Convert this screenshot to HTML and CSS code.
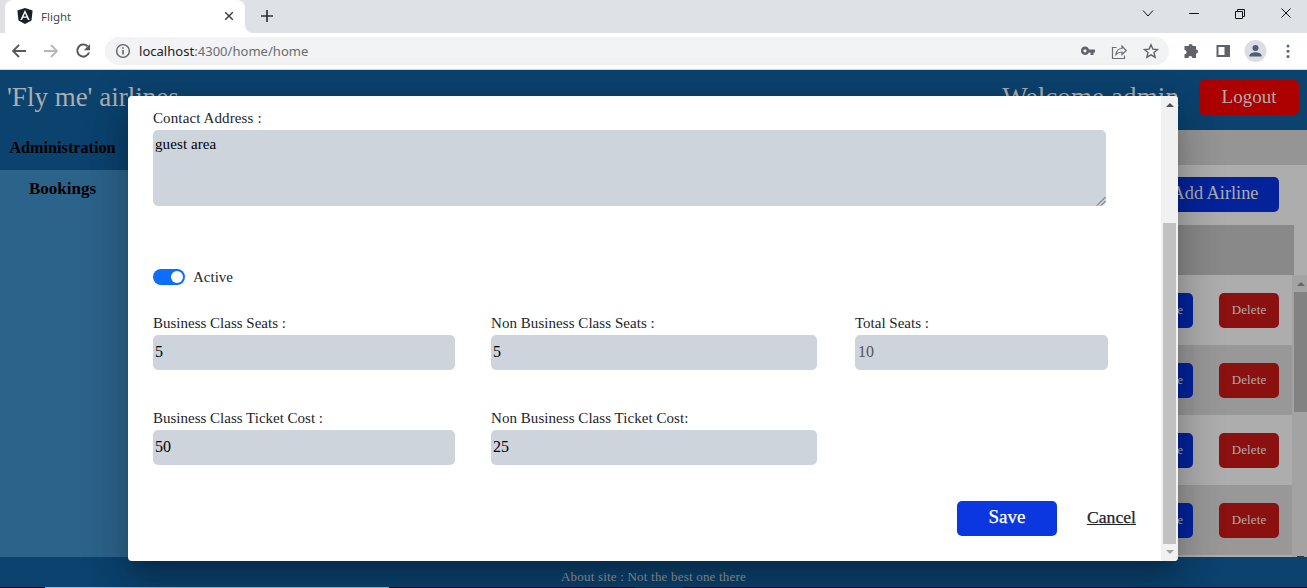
FILE: index.html
```html
<!DOCTYPE html>
<html lang="en">
<head>
<meta charset="utf-8">
<title>Flight</title>
<link rel="stylesheet" href="styles.css">
</head>
<body>
<div class="window">
  <div class="tabs">
    <div class="tab">
      <svg class="favicon" width="16" height="16" viewBox="0 0 16 16"><path d="M8 0l7.600 2.600-1.100 9.900L8 16l-6.500-3.500L.4 2.600z" fill="#17202b"/><path d="M8 1.900l-4.700 10.200h1.800l.95-2.300h3.900l.95 2.300h1.800zm0 3.300l1.400 3.200H6.600z" fill="#fff"/></svg>
      <span class="tab-title">Flight</span>
      <svg class="tab-close" width="10" height="10" viewBox="0 0 10 10"><path d="M1.200 1.200l7.600 7.600M8.800 1.200L1.200 8.800" stroke="#3c4043" stroke-width="1.500"/></svg>
    </div>
    <svg class="flare" width="8" height="8" viewBox="0 0 8 8"><path d="M0 0a8 8 0 0 0 8 8H0z" fill="#fff"/></svg>
    <svg class="new-tab" width="14" height="14" viewBox="0 0 14 14"><path d="M7 1v12M1 7h12" stroke="#303336" stroke-width="1.700"/></svg>
    <svg class="win-controls" width="150" height="20" viewBox="0 0 150 20" fill="none" stroke="#111" stroke-width="1"><path d="M5 7.500l5 5.500 5-5.500M51 10.500h10M97.500 8.500h7v7h-7zM99.500 8.500v-2h7v7h-2M143.500 5.500l9 9M152.500 5.500l-9 9"/></svg>
  </div>
  <div class="toolbar">
    <svg class="nav-icons" width="84" height="20" viewBox="0 0 84 20" fill="none" stroke-width="1.800"><path d="M14 10H1M7 4l-6 6 6 6" stroke="#55585c"/><path d="M32 10h13M39 4l6 6-6 6" stroke="#b5b7ba"/><path d="M75.500 5.300A6 6 0 1 0 77 11.500" stroke="#55585c" stroke-width="2"/><path d="M78 3v6.200h-6.200z" fill="#55585c"/></svg>
    <div class="address">
      <svg width="16" height="16" viewBox="0 0 16 16"><circle cx="8" cy="8" r="6.400" fill="none" stroke="#5f6368" stroke-width="1.400"/><path d="M7.200 7h1.600v4.500H7.200zM7.200 4.300h1.600v1.500H7.200z" fill="#5f6368"/></svg>
      <span class="url"><b>localhost</b>:4300/home/home</span>
      <svg class="address-icons" width="82" height="20" viewBox="0 0 82 20"><path fill="#5f6368" fill-rule="evenodd" d="M5 5.500a4.200 4.200 0 0 1 4 3h6v3h-1.500V14h-3v-2.500H9A4.200 4.200 0 1 1 5 5.500zm0 2.700a1.600 1.600 0 1 0 0 3.200 1.600 1.600 0 0 0 0-3.200z"/><g fill="none" stroke="#6b6e73" stroke-width="1.200"><path d="M36.500 6.500h-4v11h12v-3"/><path d="M36 13.500c.5-4 2.500-6 6-6V5l4.300 4.500L42 13.500V11c-3 0-4.500 1-6 2.500z"/></g><path fill="none" stroke="#5f6368" stroke-width="1.400" d="M71 3.800l1.900 4.300 4.600.4-3.500 3.100 1.100 4.600-4.100-2.400-4.100 2.400 1.100-4.600-3.500-3.100 4.600-.4z"/></svg>
    </div>
    <svg class="tools" width="120" height="22" viewBox="0 0 120 22"><path fill="#5f6368" d="M3 6h3.500a2.100 2.100 0 0 1 4.200 0H14v3.500a2.100 2.100 0 0 1 0 4.200V18h-3.700a2 2 0 0 0-4 0H2.500v-3.700a2.100 2.100 0 0 0 0-4.200V6z"/><path d="M34.500 5h13.500v12H34.500zm2 2v8h6V7z" fill="#5f6368" fill-rule="evenodd"/><circle cx="73.500" cy="11" r="11" fill="#dadde3"/><circle cx="73.500" cy="8" r="3" fill="#4e5d75"/><path d="M67.500 16.500v-1.200c0-2 4-3.100 6-3.100s6 1.100 6 3.100v1.200z" fill="#4e5d75"/><g fill="#5f6368"><circle cx="106" cy="6" r="1.500"/><circle cx="106" cy="11.300" r="1.500"/><circle cx="106" cy="16.500" r="1.500"/></g></svg>
  </div>

  <div class="page">
    <header class="header">
      <span class="brand">'Fly me' airlines</span>
      <span class="welcome">Welcome admin</span>
      <span class="logout">Logout</span>
    </header>
    <main class="main">
      <nav class="side">
        <div class="side-item selected">Administration</div>
        <div class="side-item">Bookings</div>
      </nav>
      <section class="content">
        <div class="content-bar"></div>
        <div class="actions"><span class="add">Add Airline</span></div>
        <div class="table-head"></div>
        <div class="table-body">
          <div class="rows">
            <div class="row"><span class="update">Update</span><span class="delete">Delete</span></div>
            <div class="row"><span class="update">Update</span><span class="delete">Delete</span></div>
            <div class="row"><span class="update">Update</span><span class="delete">Delete</span></div>
            <div class="row"><span class="update">Update</span><span class="delete">Delete</span></div>
          </div>
          <div class="table-scroll"><i class="arrow-up"></i><div class="table-thumb"></div><i class="arrow-stub"></i></div>
        </div>
      </section>
    </main>
    <footer class="footer"><span>About site : Not the best one there</span></footer>
    <div class="taskbar"><i></i><i></i></div>
  </div>

  <div class="modal">
    <form class="form">
      <label class="label w-address">Contact Address :</label>
      <div class="area"><span>guest area</span><svg width="10" height="10" viewBox="0 0 10 10"><path d="M1 9.500L9.500 1M5 9.500L9.500 5" stroke="#555" stroke-width="1"/></svg></div>
      <div class="switch-row"><span class="switch"></span><span class="w-active">Active</span></div>
      <div class="fields">
        <div><label class="label">Business Class Seats :</label><div class="input">5</div></div>
        <div><label class="label w-non">Non Business Class Seats :</label><div class="input">5</div></div>
        <div><label class="label">Total Seats :</label><div class="input disabled">10</div></div>
        <div><label class="label">Business Class Ticket Cost :</label><div class="input">50</div></div>
        <div><label class="label w-non">Non Business Class Ticket Cost:</label><div class="input">25</div></div>
      </div>
      <div class="buttons"><span class="save">Save</span><span class="cancel">Cancel</span></div>
    </form>
    <div class="modal-scroll"><i class="arrow-up"></i><div class="modal-thumb"></div><i class="arrow-down"></i></div>
  </div>
</div>
</body>
</html>
```
FILE: styles.css
```css
* { box-sizing: border-box; }
body { margin: 0; font-family: "Liberation Serif", "Times New Roman", serif; font-size: 16px; color: #000; }
svg { display: block; flex: none; }
.window { position: relative; width: 1307px; height: 588px; overflow: hidden; display: flex; flex-direction: column; }

/* Browser frame */
.tabs { height: 33px; background: #dee1e6; display: flex; font-family: "Noto Sans", sans-serif; }
.tab { margin-left: 5px; width: 240px; background: #fff; border-radius: 8px 8px 0 0; display: flex; align-items: center; padding: 0 11px 1px 12px; }
.tab-title { flex: 1; margin-left: 8px; font-size: 11.5px; color: #45494d; }
.flare { align-self: flex-end; }
.new-tab { margin: 9px 0 0 7px; }
.win-controls { margin: 3px 19px 0 auto; overflow: visible; }
.toolbar { height: 37px; background: #fff; border-bottom: 1px solid #d5d9dd; display: flex; align-items: center; padding: 0 0 0 12px; }
.address { width: 1064px; flex: none; height: 28px; margin-left: 9px; background: #f1f3f4; border-radius: 14px; display: flex; align-items: center; padding: 0 10px; }
.url { margin-left: 8px; font: 13px/20px "Noto Sans", sans-serif; letter-spacing: .03px; color: #696c70; flex: 1; }
.url b { font-weight: 400; color: #202124; }
.address-icons { margin-right: -3px; }
.tools { margin-left: 13px; }

/* Application */
.page { height: 518px; display: flex; flex-direction: column; }
.header { height: 60px; background: #0b426e; color: #adadad; display: flex; align-items: center; padding: 0 8px 5px 7px; font-size: 27px; }
.brand, .welcome { padding-bottom: 1px; }
.welcome { margin-left: auto; margin-right: 20px; letter-spacing: .1px; }
.logout { width: 100px; height: 35px; border-radius: 5px; background: #ad0000; font-size: 19px; line-height: 33px; text-align: center; }
.main { height: 427px; display: flex; }
.side { width: 128px; background: #2c638b; font-size: 17px; font-weight: 700; }
.side-item { height: 40px; line-height: 37px; text-align: center; padding-right: 3px; }
.selected { background: #0b426e; font-size: 16.200px; }
.content { flex: 1; background: #adadad; display: flex; flex-direction: column; }
.content-bar { height: 35px; background: #959595; }
.actions { height: 60px; padding: 12px 28px 0 0; display: flex; justify-content: flex-end; }
.add { width: 128px; height: 35px; border-radius: 5px; background: #04239b; color: #adadad; font-size: 18.300px; line-height: 32px; text-align: center; }
.table-head { height: 50px; margin-right: 13px; background: #898989; }
.table-body { height: 282px; display: flex; }
.rows { flex: 1; }
.row { height: 70px; display: flex; align-items: center; justify-content: flex-end; gap: 26px; padding-right: 13px; }
.row:nth-child(even) { background: #989898; }
.update, .delete { width: 60px; height: 35px; border-radius: 5px; color: #adadad; font-size: 13px; letter-spacing: .1px; line-height: 34px; text-align: center; background: #8b1010; }
.update { background: #04239b; text-align: right; padding-right: 10px; }
.table-scroll { width: 15px; background: #a3a3a3; padding-left: 2px; display: flex; flex-direction: column; align-items: center; }
.table-thumb { width: 13px; height: 120px; margin-top: 6px; background: #828282; }
.arrow-up { border: 4px solid transparent; border-top: 0; border-bottom-color: #505050; margin-top: 7px; }
.table-scroll .arrow-up { border-bottom-color: #666; }
.arrow-down { border: 4px solid transparent; border-bottom: 0; border-top-color: #a3a3a3; }
.arrow-stub { width: 7px; height: 1px; margin-top: auto; background: #333; }
.footer { height: 30px; background: #0b426e; color: #999693; font-size: 13px; letter-spacing: .2px; line-height: 40px; text-align: center; }
.taskbar { height: 1px; background: #000; display: flex; padding-left: 45px; gap: 246px; }
.taskbar i { width: 344px; height: 1px; background: #aebdce; }
.taskbar i + i { width: 48px; background: #252326; }

/* Airline editor */
.modal { position: absolute; left: 128px; top: 96px; width: 1050px; height: 465px; background: #fff; border-radius: 4px; overflow: hidden; display: flex; box-shadow: 0 11px 15px -7px rgba(0,0,0,.2), 0 24px 38px 3px rgba(0,0,0,.14), 0 9px 46px 8px rgba(0,0,0,.12); }
.form { width: 1033px; padding: 12px 25px 0; color: #212529; }
.label { display: table; height: 22px; line-height: 21px; font-size: 15px; white-space: nowrap; }
.w-address { letter-spacing: .12px; }
.w-non { letter-spacing: .05px; }
.area { width: 953px; height: 76px; border-radius: 5px; background: #ced4dc; color: #000; padding: 4px 0 0 2px; display: flex; justify-content: space-between; font-size: 15px; letter-spacing: .1px; line-height: 21px; }
.area svg { align-self: flex-end; }
.switch-row { display: flex; align-items: center; gap: 8px; height: 24px; margin-top: 59px; }
.w-active { font-size: 15px; line-height: 24px; }
.switch { width: 32px; height: 16px; border-radius: 8px; background: #0d6efd; display: flex; justify-content: flex-end; padding: 2px; }
.switch::after { content: ""; width: 12px; height: 12px; border-radius: 50%; background: #fff; }
.fields { display: grid; grid-template-columns: 302px 326px 253px; column-gap: 37px; row-gap: 38px; margin-top: 24px; }
.fields > div:nth-child(3n+2) { margin-left: -1px; margin-right: 1px; }
.input { height: 35px; border-radius: 5px; background: #ced4dc; color: #000; line-height: 34px; padding-left: 2px; }
.disabled { color: #545454; padding-left: 3px; }
.buttons { display: flex; justify-content: flex-end; gap: 30px; margin-top: 36px; font-size: 19px; line-height: 32px; }
.save { width: 100px; height: 35px; border-radius: 5px; background: #0a37df; color: #fff; text-align: center; -webkit-text-stroke: .25px #fff; }
.cancel { text-decoration: underline; font-size: 17.700px; line-height: 33px; -webkit-text-stroke: .25px #212529; }
.modal-scroll { width: 17px; background: #f1f1f1; display: flex; flex-direction: column; align-items: center; }
.modal-thumb { width: 13px; height: 321px; margin-top: 116px; margin-bottom: 6px; background: #c1c1c1; }
```
